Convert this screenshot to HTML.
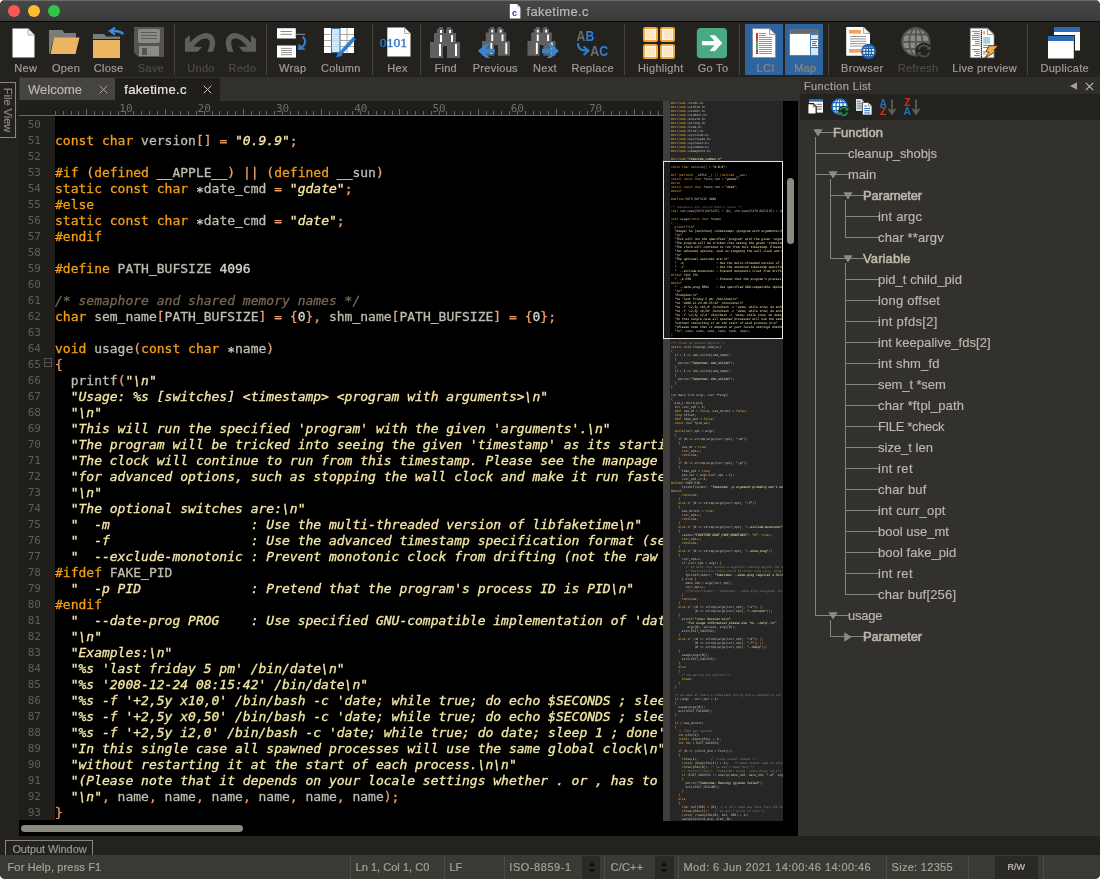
<!DOCTYPE html>
<html lang="en">
<head>
<meta charset="utf-8">
<title>faketime.c</title>
<style>
html,body{margin:0;padding:0;background:#fff;}
body{width:1100px;height:879px;overflow:hidden;position:relative;font-family:"Liberation Sans",sans-serif;}
#win{position:absolute;left:0;top:0;width:1100px;height:879px;background:#23221e;border-radius:5px;overflow:hidden;will-change:transform;}
#win *{box-sizing:border-box;}
.abs{position:absolute;}
/* title bar */
#title{position:absolute;left:0;top:0;width:1100px;height:21px;background:linear-gradient(#464646,#3b3b3b);border-top:1px solid #6a6a6a;}
#title .dot{position:absolute;top:4px;width:12px;height:12px;border-radius:50%;}
#title .name{-webkit-text-stroke:0.2px;position:absolute;left:526.5px;top:3px;font-size:13px;line-height:16px;color:#b9b8b4;letter-spacing:0.3px;white-space:pre;}
#tline{position:absolute;left:0;top:21px;width:1100px;height:1px;background:#0a0a0a;}
/* toolbar */
#tb{position:absolute;left:0;top:22px;width:1100px;height:55px;background:#23221e;}
.lbl{-webkit-text-stroke:0.2px;position:absolute;top:61px;font-size:11px;line-height:14px;color:#a29d92;white-space:pre;transform:translateX(-50%);letter-spacing:0.3px;}
.lbl.dim{color:#4f4c47;}
.lbl.act{color:#8d877c;}
.sep{position:absolute;top:24px;width:1px;height:51px;background:#46423c;}
.actbg{position:absolute;top:24px;height:51px;background:#2f659e;}
.ico{position:absolute;overflow:visible;}
/* tab bar */
#tabs{position:absolute;left:0;top:77px;width:800px;height:24px;background:#32312d;}
#tab1{position:absolute;left:20px;top:78px;width:95px;height:22px;background:#454440;}
#tab2{position:absolute;left:115px;top:78px;width:105px;height:23px;background:#1f1e1b;}
.tabt{-webkit-text-stroke:0.2px;position:absolute;top:4px;font-size:13px;line-height:16px;white-space:pre;}
/* left strip */
#lstrip{position:absolute;left:0;top:77px;width:19px;height:759px;background:#23221e;}
#fv{position:absolute;left:-1px;top:82px;width:17px;height:56px;border:1px solid #8a867c;}
#fvt{position:absolute;left:8px;top:110px;width:0;height:0;}
#fvt span{-webkit-text-stroke:0.2px;position:absolute;left:-30px;top:-7px;width:60px;height:14px;text-align:center;font-size:11px;line-height:14px;color:#8f8b80;transform:rotate(90deg);letter-spacing:0px;white-space:pre;}
/* ruler */
#ruler{position:absolute;left:19px;top:100px;width:644px;height:16px;background:#1f1e1b;overflow:hidden;}
#ruler .base{position:absolute;left:0;top:15px;width:644px;height:1px;background:#6e6c66;}
#rin{position:absolute;left:-19px;top:0;}
#rin i{position:absolute;bottom:-16px;width:1px;background:#686660;top:auto;}
#rin span{position:absolute;top:3px;width:20px;text-align:center;font-family:"DejaVu Sans Mono",monospace;font-size:11px;line-height:12px;color:#6e6c66;}
/* gutter */
#gut{position:absolute;left:19px;top:116px;width:36px;height:704px;background:#1f1e1b;font-family:"DejaVu Sans Mono",monospace;font-size:11px;line-height:16px;color:#5f5e5a;text-align:right;padding-right:14px;}
#gut div{height:16px;padding-top:1px;}
#fold{position:absolute;left:44px;top:358px;width:8px;height:9px;border:1px solid #55544f;}
#fold:after{content:"";position:absolute;left:0;top:3px;width:6px;height:1px;background:#55544f;}
/* code */
#code{position:absolute;left:55px;top:116px;width:608px;height:720px;background:#000;overflow:hidden;font-family:"DejaVu Sans Mono",monospace;font-size:13px;line-height:16px;color:#bdbcb0;}
#code .ln{height:16px;white-space:pre;position:relative;top:1px;-webkit-text-stroke:0.3px;}
#code em,#mini em{font-style:normal;color:#f39f12;}
#code s,#mini s{text-decoration:none;color:#ee9f6a;}
#code u,#mini u{text-decoration:none;color:#d6d5cc;}
#code u.a{position:relative;top:2.5px;}
#code b.p,#mini b.p{color:#f39f12;font-weight:normal;}
#code b.s,#mini b.s{color:#f6e6a6;font-weight:normal;font-style:oblique;}
#code i.c,#mini i.c{color:#75664f;font-style:oblique;}
#hthumb{position:absolute;left:21px;top:825px;width:222px;height:7px;border-radius:3.5px;background:#8a8a80;}
#blk{position:absolute;left:19px;top:820px;width:36px;height:16px;background:#000;}
/* minimap */
#mm{position:absolute;left:663px;top:101px;width:120px;height:720px;background:#000;overflow:hidden;}
#mmg{position:absolute;left:0;top:0;width:7px;height:720px;background:#1f1e1b;}
#mini{position:absolute;left:8px;top:0px;font-family:"DejaVu Sans Mono",monospace;font-size:3px;line-height:4px;color:#bdbcb0;}
#mini div{height:4px;white-space:pre;}
.mmo{position:absolute;left:0;width:120px;background:rgba(255,255,255,0.15);}
#mmbox{position:absolute;left:0;top:60px;width:120px;height:178px;border:1px solid #e4e4e0;}
#vtrack{position:absolute;left:783px;top:101px;width:15px;height:735px;background:#000;}
#vthumb{position:absolute;left:787px;top:178px;width:7px;height:66px;border-radius:3.5px;background:#8a8a80;}
#mmbot{position:absolute;left:663px;top:821px;width:135px;height:15px;background:#000;}
#split{position:absolute;left:798px;top:77px;width:2px;height:759px;background:#32312d;}
/* panel */
#ph{position:absolute;left:800px;top:77px;width:300px;height:17px;background:#2e2d29;}
#ph .t{-webkit-text-stroke:0.2px;position:absolute;left:4px;top:2px;font-size:11px;line-height:14px;color:#a8a397;letter-spacing:0.38px;white-space:pre;}
#pt{position:absolute;left:800px;top:94px;width:300px;height:26px;background:#23221e;}
#tree{position:absolute;left:800px;top:120px;width:300px;height:716px;background:#32312d;}
#treein{position:absolute;left:-800px;top:-120px;}
#treein i.h{position:absolute;height:1px;background:#85847f;}
#treein i.v{position:absolute;width:1px;background:#85847f;}
#treein .tri{position:absolute;}
#treein .tl{position:absolute;font-size:13px;line-height:16px;color:#bcb8ab;white-space:pre;-webkit-text-stroke:0.15px #bcb8ab;}
#treein .tl.b{-webkit-text-stroke:0.55px #bcb8ab;}
/* bottom */
#outrow{position:absolute;left:0;top:836px;width:1100px;height:19px;background:#23221e;}
#outtab{position:absolute;left:5px;top:840px;width:88px;height:17px;border:1px solid #8a867c;}
#outtab span{-webkit-text-stroke:0.2px;position:absolute;left:6.4px;top:1px;font-size:11px;line-height:14px;color:#9b978c;letter-spacing:-0.08px;white-space:pre;}
#status{position:absolute;left:0;top:855px;width:1100px;height:24px;background:#3a3a35;}
#status .t{-webkit-text-stroke:0.2px;position:absolute;top:5px;font-size:11px;line-height:14px;color:#a5a196;white-space:pre;}
#status .sp{position:absolute;top:1px;width:1px;height:23px;background:#4d4b46;}
#status .bx{position:absolute;top:1px;height:23px;background:#2a2926;}
</style>
</head>
<body>
<div id="win">
<div id="title">
<div class="dot" style="left:8px;background:#fc5753;"></div>
<div class="dot" style="left:28px;background:#fdbc2f;"></div>
<div class="dot" style="left:48px;background:#30c748;"></div>
<svg class="abs" style="left:509px;top:2px" width="13" height="16" viewBox="0 0 13 16"><path d="M0.8 1h7l3.6 3.6V15.4H0.8z" fill="#fff"/><path d="M7.8 1l3.6 3.6H7.8z" fill="#d8d8e0"/><text x="3" y="13" font-family="Liberation Sans,sans-serif" font-size="9" font-weight="bold" fill="#4a1f9a">c</text></svg>
<div class="name">faketime.c</div>
</div>
<div id="tline"></div>
<div id="tb"></div>
<svg class="abs" style="left:0;top:22px" width="1100" height="55" viewBox="0 22 1100 55">
<!-- New -->
<path d="M12.5 28.5H28L34.5 35V57.5H12.5Z" fill="#fff"/>
<path d="M28 28.5V35H34.5Z" fill="#f4f4f4" stroke="#9a9a9a" stroke-width="0.8" stroke-linejoin="round"/>
<!-- Open -->
<path d="M49 30H62.3L64.5 33H76V38H53.8L49.8 53.5H49Z" fill="#7b7b7b"/>
<path d="M54 37.5H79.5L75.5 54H50.5Z" fill="#ebb562"/>
<!-- Close -->
<path d="M93 34H104L106.3 36.5H120V39H93Z" fill="#7b7b7b"/>
<rect x="93" y="40" width="27" height="18" fill="#ebb562"/>
<path d="M111.5 31.2C118 30.4 121 31.6 123.2 34.2" stroke="#3a8ad8" stroke-width="2.6" fill="none"/>
<path d="M115.2 27.6L110 31.1L115.2 34.6" stroke="#3a8ad8" stroke-width="2.2" fill="none" stroke-linejoin="miter"/>
<!-- Save -->
<path d="M134 27H164V57H138.5L134 52.5Z" fill="#55544f"/>
<rect x="138" y="29" width="22" height="14" rx="2" fill="#8c8a87"/>
<path d="M141 32.5H157M141 35.5H157M141 38.5H157" stroke="#5d5c58" stroke-width="1"/>
<rect x="139" y="46" width="20" height="10" fill="#8c8a87"/>
<rect x="142" y="48" width="5" height="7" fill="#55544f"/>
<!-- Undo -->
<path fill="#5f5e5b" d="M184.95 39.2L189.7 34.9L190 42.6C193 39.5 198 34 205.6 33.1C212 33 215.2 38 215.1 43.1C215 47 214 49.5 212.8 51.8H207.2C208.5 49 209.8 45.5 209.8 42.4C209.8 39.8 207.5 38.5 205.6 38.5C201 38.5 198 42 193.6 46.5L202 47L197.7 51.8H184.95Z"/>
<!-- Redo -->
<path fill="#5f5e5b" transform="translate(440.9,0) scale(-1,1)" d="M184.95 39.2L189.7 34.9L190 42.6C193 39.5 198 34 205.6 33.1C212 33 215.2 38 215.1 43.1C215 47 214 49.5 212.8 51.8H207.2C208.5 49 209.8 45.5 209.8 42.4C209.8 39.8 207.5 38.5 205.6 38.5C201 38.5 198 42 193.6 46.5L202 47L197.7 51.8H184.95Z"/>
<!-- Wrap -->
<rect x="277" y="28.2" width="18.8" height="10.3" fill="#fff"/>
<path d="M280.5 31.5H292M280.5 34.3H292" stroke="#8a8a8a" stroke-width="1"/>
<path d="M295.8 34.3H305" stroke="#b0b0b0" stroke-width="0.8"/>
<rect x="277" y="45.5" width="19" height="12.1" fill="#fff"/>
<path d="M281 48.4H292M281 50.5H292M281 52.6H292M281 54.7H292" stroke="#8a8a8a" stroke-width="0.9"/>
<path d="M302.6 36.6C306.8 40.5 305.5 45.5 300.5 47.8" stroke="#2f7fd0" stroke-width="2" fill="none"/>
<path d="M298.6 43.8L298 50L305.8 49.4Z" fill="#2f7fd0"/>
<!-- Column -->
<rect x="324" y="28" width="30" height="25" fill="#fff"/>
<path d="M347 28V53M324 34.5H354M324 40.5H354M324 46.5H354" stroke="#a59d8e" stroke-width="0.9"/>
<rect x="331.5" y="28.5" width="8.5" height="24" fill="#cfe9fb" stroke="#3b6e9e" stroke-width="1"/>
<path d="M331.5 34.5H340M331.5 40.5H340M331.5 46.5H340" stroke="#b5d3ea" stroke-width="0.8"/>
<path d="M354.6 38L340.3 53.5" stroke="#2f7fd0" stroke-width="3.6"/>
<path d="M338.2 51.6L342.6 55.6L336.2 57.6Z" fill="#2f7fd0"/>
<!-- Hex -->
<path d="M387.3 27.5H404.5L410.5 33.5V56.5H387.3Z" fill="#fff"/>
<path d="M404.5 27.5V33.5H410.5Z" fill="#f4f4f4" stroke="#9a9a9a" stroke-width="0.8" stroke-linejoin="round"/>
<text x="379.8" y="46.8" font-family="Liberation Serif,serif" font-size="12.6" fill="#2a78c8" stroke="#2a78c8" stroke-width="0.35" textLength="27.4" lengthAdjust="spacingAndGlyphs">0101</text>
<!-- Find -->
<g id="bino">
<path fill="#606060" d="M439 27h4v2h1v4h2v-4h1v-2h4v2h2v4h3v9h4v16h-13v-11.7h-4V58h-13V42h4v-9h3v-4h2z"/>
<path fill="#fff" d="M440 30h2v3h-2zM449 30h2v3h-2zM440 35h2v7h-2zM451 35h2v7h-2zM439 44h2v12h-2zM455 44h2v12h-2z"/>
</g>
<!-- Previous -->
<g transform="translate(482,27) scale(0.9333,0.93) translate(-430,-27)">
<path fill="#606060" d="M439 27h4v2h1v4h2v-4h1v-2h4v2h2v4h3v9h4v16h-13v-11.7h-4V58h-13V42h4v-9h3v-4h2z"/>
<path fill="#fff" d="M440 30h2v3h-2zM449 30h2v3h-2zM440 35h2v7h-2zM451 35h2v7h-2zM439 44h2v12h-2zM455 44h2v12h-2z"/>
</g>
<path fill="#3a85d0" d="M477.8 51L486 43.8H490L484.8 48.8H494.8V53.2H484.8L490 58H486Z"/>
<!-- Next -->
<g transform="translate(527.5,27) scale(0.9333,0.93) translate(-430,-27)">
<path fill="#606060" d="M439 27h4v2h1v4h2v-4h1v-2h4v2h2v4h3v9h4v16h-13v-11.7h-4V58h-13V42h4v-9h3v-4h2z"/>
<path fill="#fff" d="M440 30h2v3h-2zM449 30h2v3h-2zM440 35h2v7h-2zM451 35h2v7h-2zM439 44h2v12h-2zM455 44h2v12h-2z"/>
</g>
<path fill="#3a85d0" transform="translate(1036.8,0) scale(-1,1)" d="M477.8 51L486 43.8H490L484.8 48.8H494.8V53.2H484.8L490 58H486Z"/>
<!-- Replace -->
<text x="576.6" y="40.6" font-family="Liberation Sans,sans-serif" font-size="14.4" font-weight="bold" textLength="17.6" lengthAdjust="spacingAndGlyphs"><tspan fill="#6e6e6e">A</tspan><tspan fill="#2a80d8">B</tspan></text>
<text x="590.3" y="55.8" font-family="Liberation Sans,sans-serif" font-size="14.4" font-weight="bold" textLength="18" lengthAdjust="spacingAndGlyphs"><tspan fill="#6e6e6e">A</tspan><tspan fill="#2a80d8">C</tspan></text>
<path d="M578 43.2C578 49 581 50.6 587.5 50.6" stroke="#2a80d8" stroke-width="2" fill="none"/>
<path d="M583.6 46.4L588.4 50.7L583.6 55" stroke="#2a80d8" stroke-width="2" fill="none"/>
<!-- Highlight -->
<g id="hsq"><rect x="644" y="28" width="13" height="13" rx="1.5" fill="#ffe5c4" stroke="#f0a83c" stroke-width="2"/><rect x="645.5" y="29.5" width="10" height="10" fill="none" stroke="#fff6ea" stroke-width="1"/></g>
<g transform="translate(17,0)"><rect x="644" y="28" width="13" height="13" rx="1.5" fill="#ffe5c4" stroke="#f0a83c" stroke-width="2"/><rect x="645.5" y="29.5" width="10" height="10" fill="none" stroke="#fff6ea" stroke-width="1"/></g>
<g transform="translate(0,17)"><rect x="644" y="28" width="13" height="13" rx="1.5" fill="#ffe5c4" stroke="#f0a83c" stroke-width="2"/><rect x="645.5" y="29.5" width="10" height="10" fill="none" stroke="#fff6ea" stroke-width="1"/></g>
<g transform="translate(17,17)"><rect x="644" y="28" width="13" height="13" rx="1.5" fill="#ffe5c4" stroke="#f0a83c" stroke-width="2"/><rect x="645.5" y="29.5" width="10" height="10" fill="none" stroke="#fff6ea" stroke-width="1"/></g>
<!-- Go To -->
<rect x="696.8" y="28" width="30.2" height="30.2" rx="4" fill="#48ab82"/>
<path d="M702 41H714.5L709.5 35.2H715L722.3 43.1L715 51H709.5L714.5 45.2H702Z" fill="#fff"/>
<!-- LCI / Map active -->
<rect x="745" y="24" width="38" height="51" fill="#2f659e"/>
<rect x="785" y="24" width="38" height="51" fill="#2f659e"/>
<path d="M752.5 28.6H769.5L775.5 34.6V57.5H752.5Z" fill="#fff" stroke="#8a8a8a" stroke-width="0.8"/>
<path d="M769.5 28.6V34.6H775.5Z" fill="#f4f4f4" stroke="#8a8a8a" stroke-width="0.8" stroke-linejoin="round"/>
<rect x="756" y="33" width="2" height="8" fill="#c8402c"/><rect x="756" y="41" width="2" height="9" fill="#40a878"/><rect x="756" y="50" width="2" height="4" fill="#c8402c"/>
<path d="M759 33.5H766M759 35.5H766M759 37.5H772M759 39.5H772M759 41.5H772M759 43.5H772M759 45.5H772M759 47.5H772M759 49.5H772M759 51.5H772M759 53.5H772" stroke="#8a8a8a" stroke-width="0.9"/>
<rect x="789" y="29" width="30" height="5" fill="#6b6b6b"/>
<rect x="789.4" y="33.6" width="29.2" height="22" fill="#fff" stroke="#6b6b6b" stroke-width="0.8"/>
<rect x="810" y="34" width="8.6" height="21.6" fill="#3a78b8"/>
<rect x="811" y="35" width="7" height="4" fill="#cfe9fb"/><rect x="811" y="40" width="7" height="7" fill="#fff"/><rect x="811" y="48" width="7" height="7" fill="#cfe9fb"/>
<path d="M812 41.7H817M812 43.6H816M812 45.5H817" stroke="#555" stroke-width="0.9"/>
<!-- Browser -->
<path d="M846.2 27H863.5L870 33.5V55.8H846.2Z" fill="#fff"/>
<path d="M863.5 27V33.5H870Z" fill="#f0f0f0" stroke="#a0a0a0" stroke-width="0.8" stroke-linejoin="round"/>
<rect x="849" y="30" width="12" height="3.6" fill="#f0a060"/><rect x="849" y="49" width="12" height="3.6" fill="#f0a060"/>
<path d="M850 36.5H866M850 38.9H866M850 41.3H866M850 43.7H866M850 46.1H866" stroke="#8a8a8a" stroke-width="0.9"/>
<circle cx="868.6" cy="51.4" r="7.6" fill="#1f5fa8"/>
<circle cx="868.6" cy="51.4" r="5.6" fill="#fff"/>
<path d="M868.6 45.8V57M863 51.4H874.2M864 48.4H873.2M864 54.4H873.2" stroke="#1f5fa8" stroke-width="1.3" fill="none"/>
<ellipse cx="868.6" cy="51.4" rx="2.8" ry="5.6" fill="none" stroke="#1f5fa8" stroke-width="1.2"/>
<!-- Refresh -->
<circle cx="915.8" cy="41.8" r="13.6" fill="#8b8a88" stroke="#565553" stroke-width="2"/>
<path d="M915.8 28V55.6M902 41.8H929.6M904.5 34.5H927M904.5 49H927" stroke="#565553" stroke-width="1.8" fill="none"/>
<ellipse cx="915.8" cy="41.8" rx="6.5" ry="13.6" fill="none" stroke="#565553" stroke-width="1.8"/>
<circle cx="924" cy="51" r="8.6" fill="#23221e"/>
<path d="M918.6 49.5A5.6 5.6 0 0 1 928.8 48.2M929.4 52.5A5.6 5.6 0 0 1 919.2 53.8" stroke="#4b4a48" stroke-width="2" fill="none"/>
<path d="M930.6 45.5V50H926.2ZM917.4 56.5V52H921.8Z" fill="#4b4a48"/>
<!-- Live preview -->
<path d="M970.3 28.2H987.4L994 34.6V57.7H970.3Z" fill="#fff" stroke="#8c8c8c" stroke-width="0.7"/>
<path d="M987.4 28.2V34.6H994Z" fill="#fafafa" stroke="#8c8c8c" stroke-width="0.8" stroke-linejoin="round"/>
<path d="M972 31.4H979.8M974 33.4H979.8M972 35.4H979.8M972 37.4H979.8M972 39.4H979.8M975 41.4H979.8M975 43.4H979.8M972 45.4H979.8M972 49.5H979.8M974 51.5H979.8M976 53.5H979.8M974 55.5H979.8M983.2 45.4H990M983.2 47.5H988" stroke="#777" stroke-width="0.9"/>
<path d="M981.4 30V57.4" stroke="#111" stroke-width="1.1" stroke-dasharray="1.5 0.5"/>
<rect x="983.2" y="31.1" width="1.9" height="3.5" fill="#f0a060"/><rect x="983.2" y="51" width="2.2" height="3.7" fill="#f0a060"/>
<rect x="983.2" y="37" width="6.8" height="6.7" fill="#a5cfee"/>
<path d="M989.3 45.6L998.2 45.8L993.8 50.2L996 51.2L984.1 58.8L988.9 52.3L985.8 51.7Z" fill="#f0b040" stroke="#23221e" stroke-width="0.8" stroke-linejoin="round"/>
<!-- Duplicate -->
<rect x="1054" y="27" width="26" height="23.5" fill="#fff"/><rect x="1054" y="27" width="26" height="5" fill="#2d6cb5"/>
<rect x="1047" y="35" width="28" height="24.5" fill="#23221e"/>
<rect x="1048" y="36" width="25.8" height="22.5" fill="#fff"/><rect x="1048" y="36" width="25.8" height="5" fill="#2d6cb5"/>
</svg>
<i class="sep" style="left:174px"></i><i class="sep" style="left:266px"></i><i class="sep" style="left:371.5px"></i><i class="sep" style="left:420px"></i><i class="sep" style="left:624px"></i><i class="sep" style="left:739px"></i><i class="sep" style="left:828px"></i><i class="sep" style="left:1027px"></i>
<span class="lbl" style="left:25.8px">New</span>
<span class="lbl" style="left:66px">Open</span>
<span class="lbl" style="left:108.6px">Close</span>
<span class="lbl dim" style="left:151px">Save</span>
<span class="lbl dim" style="left:201px">Undo</span>
<span class="lbl dim" style="left:242.3px">Redo</span>
<span class="lbl" style="left:292.7px">Wrap</span>
<span class="lbl" style="left:340.8px">Column</span>
<span class="lbl" style="left:397.5px">Hex</span>
<span class="lbl" style="left:445.7px">Find</span>
<span class="lbl" style="left:495.3px">Previous</span>
<span class="lbl" style="left:545px">Next</span>
<span class="lbl" style="left:592.7px">Replace</span>
<span class="lbl" style="left:660.8px">Highlight</span>
<span class="lbl" style="left:713px">Go To</span>
<span class="lbl act" style="left:765.5px">LCI</span>
<span class="lbl act" style="left:805.3px">Map</span>
<span class="lbl" style="left:862.3px">Browser</span>
<span class="lbl dim" style="left:918px">Refresh</span>
<span class="lbl" style="left:984.6px">Live preview</span>
<span class="lbl" style="left:1064.7px">Duplicate</span>

<div id="tabs"></div>
<div id="lstrip"></div>
<div id="fv"></div><div id="fvt"><span>File View</span></div>
<div id="tab1"><span class="tabt" style="left:8px;color:#b9b5a9;">Welcome</span>
<svg class="abs" style="left:79px;top:7px" width="9" height="9" viewBox="0 0 9 9"><path d="M0.7 0.7l7.6 7.6M8.3 0.7l-7.6 7.6" stroke="#aaa69b" stroke-width="1" fill="none"/></svg></div>
<div id="tab2"><span class="tabt" style="left:9.3px;color:#eae6db;letter-spacing:0.32px;">faketime.c</span>
<svg class="abs" style="left:88px;top:7px" width="9" height="9" viewBox="0 0 9 9"><path d="M0.7 0.7l7.6 7.6M8.3 0.7l-7.6 7.6" stroke="#c9c5ba" stroke-width="1" fill="none"/></svg></div>
<div class="abs" style="left:220px;top:100px;width:443px;height:1px;background:#32312d;z-index:3"></div>
<div id="ruler"><div class="base"></div><div id="rin"><i style="left:55.00px;height:4.6px"></i><i style="left:62.83px;height:4.6px"></i><i style="left:70.66px;height:4.6px"></i><i style="left:78.48px;height:4.6px"></i><i style="left:86.31px;height:7.4px"></i><i style="left:94.14px;height:4.6px"></i><i style="left:101.97px;height:4.6px"></i><i style="left:109.80px;height:4.6px"></i><i style="left:117.62px;height:4.6px"></i><i style="left:125.45px;height:4.6px"></i><span style="left:115.95px">10</span><i style="left:133.28px;height:4.6px"></i><i style="left:141.11px;height:4.6px"></i><i style="left:148.94px;height:4.6px"></i><i style="left:156.76px;height:4.6px"></i><i style="left:164.59px;height:7.4px"></i><i style="left:172.42px;height:4.6px"></i><i style="left:180.25px;height:4.6px"></i><i style="left:188.08px;height:4.6px"></i><i style="left:195.90px;height:4.6px"></i><i style="left:203.73px;height:4.6px"></i><span style="left:194.23px">20</span><i style="left:211.56px;height:4.6px"></i><i style="left:219.39px;height:4.6px"></i><i style="left:227.22px;height:4.6px"></i><i style="left:235.04px;height:4.6px"></i><i style="left:242.87px;height:7.4px"></i><i style="left:250.70px;height:4.6px"></i><i style="left:258.53px;height:4.6px"></i><i style="left:266.36px;height:4.6px"></i><i style="left:274.18px;height:4.6px"></i><i style="left:282.01px;height:4.6px"></i><span style="left:272.51px">30</span><i style="left:289.84px;height:4.6px"></i><i style="left:297.67px;height:4.6px"></i><i style="left:305.50px;height:4.6px"></i><i style="left:313.32px;height:4.6px"></i><i style="left:321.15px;height:7.4px"></i><i style="left:328.98px;height:4.6px"></i><i style="left:336.81px;height:4.6px"></i><i style="left:344.64px;height:4.6px"></i><i style="left:352.46px;height:4.6px"></i><i style="left:360.29px;height:4.6px"></i><span style="left:350.79px">40</span><i style="left:368.12px;height:4.6px"></i><i style="left:375.95px;height:4.6px"></i><i style="left:383.78px;height:4.6px"></i><i style="left:391.60px;height:4.6px"></i><i style="left:399.43px;height:7.4px"></i><i style="left:407.26px;height:4.6px"></i><i style="left:415.09px;height:4.6px"></i><i style="left:422.92px;height:4.6px"></i><i style="left:430.74px;height:4.6px"></i><i style="left:438.57px;height:4.6px"></i><span style="left:429.07px">50</span><i style="left:446.40px;height:4.6px"></i><i style="left:454.23px;height:4.6px"></i><i style="left:462.06px;height:4.6px"></i><i style="left:469.88px;height:4.6px"></i><i style="left:477.71px;height:7.4px"></i><i style="left:485.54px;height:4.6px"></i><i style="left:493.37px;height:4.6px"></i><i style="left:501.20px;height:4.6px"></i><i style="left:509.02px;height:4.6px"></i><i style="left:516.85px;height:4.6px"></i><span style="left:507.35px">60</span><i style="left:524.68px;height:4.6px"></i><i style="left:532.51px;height:4.6px"></i><i style="left:540.34px;height:4.6px"></i><i style="left:548.16px;height:4.6px"></i><i style="left:555.99px;height:7.4px"></i><i style="left:563.82px;height:4.6px"></i><i style="left:571.65px;height:4.6px"></i><i style="left:579.48px;height:4.6px"></i><i style="left:587.30px;height:4.6px"></i><i style="left:595.13px;height:4.6px"></i><span style="left:585.63px">70</span><i style="left:602.96px;height:4.6px"></i><i style="left:610.79px;height:4.6px"></i><i style="left:618.62px;height:4.6px"></i><i style="left:626.44px;height:4.6px"></i><i style="left:634.27px;height:7.4px"></i><i style="left:642.10px;height:4.6px"></i><i style="left:649.93px;height:4.6px"></i><i style="left:657.76px;height:4.6px"></i></div></div>
<div id="code">
<div class="ln">&nbsp;</div>
<div class="ln"><em>const</em> <em>char</em> version<s>[]</s> <s>=</s> <b class="s">"0.9.9"</b><s>;</s></div>
<div class="ln">&nbsp;</div>
<div class="ln"><b class="p">#if</b> <s>(</s><em>defined</em> __APPLE__<s>)</s> <s>||</s> <s>(</s><em>defined</em> __sun<s>)</s></div>
<div class="ln"><em>static</em> <em>const</em> <em>char</em> <u class="a">*</u>date_cmd <s>=</s> <b class="s">"gdate"</b><s>;</s></div>
<div class="ln"><b class="p">#else</b></div>
<div class="ln"><em>static</em> <em>const</em> <em>char</em> <u class="a">*</u>date_cmd <s>=</s> <b class="s">"date"</b><s>;</s></div>
<div class="ln"><b class="p">#endif</b></div>
<div class="ln">&nbsp;</div>
<div class="ln"><b class="p">#define</b> PATH_BUFSIZE <u>4096</u></div>
<div class="ln">&nbsp;</div>
<div class="ln"><i class="c">/* semaphore and shared memory names */</i></div>
<div class="ln"><em>char</em> sem_name<s>[</s>PATH_BUFSIZE<s>]</s> <s>=</s> <s>{</s><u>0</u><s>},</s> shm_name<s>[</s>PATH_BUFSIZE<s>]</s> <s>=</s> <s>{</s><u>0</u><s>};</s></div>
<div class="ln">&nbsp;</div>
<div class="ln"><em>void</em> usage<s>(</s><em>const</em> <em>char</em> <u class="a">*</u>name<s>)</s></div>
<div class="ln"><s>{</s></div>
<div class="ln">  printf<s>(</s><b class="s">"\n"</b></div>
<div class="ln">  <b class="s">"Usage: %s [switches] &lt;timestamp&gt; &lt;program with arguments&gt;\n"</b></div>
<div class="ln">  <b class="s">"\n"</b></div>
<div class="ln">  <b class="s">"This will run the specified 'program' with the given 'arguments'.\n"</b></div>
<div class="ln">  <b class="s">"The program will be tricked into seeing the given 'timestamp' as its starting date and time.\n"</b></div>
<div class="ln">  <b class="s">"The clock will continue to run from this timestamp. Please see the manpage (man faketime)\n"</b></div>
<div class="ln">  <b class="s">"for advanced options, such as stopping the wall clock and make it run faster or slower.\n"</b></div>
<div class="ln">  <b class="s">"\n"</b></div>
<div class="ln">  <b class="s">"The optional switches are:\n"</b></div>
<div class="ln">  <b class="s">"  -m                  : Use the multi-threaded version of libfaketime\n"</b></div>
<div class="ln">  <b class="s">"  -f                  : Use the advanced timestamp specification format (see manpage)\n"</b></div>
<div class="ln">  <b class="s">"  --exclude-monotonic : Prevent monotonic clock from drifting (not the raw monotonic one)\n"</b></div>
<div class="ln"><b class="p">#ifdef</b> FAKE_PID</div>
<div class="ln">  <b class="s">"  -p PID              : Pretend that the program's process ID is PID\n"</b></div>
<div class="ln"><b class="p">#endif</b></div>
<div class="ln">  <b class="s">"  --date-prog PROG    : Use specified GNU-compatible implementation of 'date' program\n"</b></div>
<div class="ln">  <b class="s">"\n"</b></div>
<div class="ln">  <b class="s">"Examples:\n"</b></div>
<div class="ln">  <b class="s">"%s 'last friday 5 pm' /bin/date\n"</b></div>
<div class="ln">  <b class="s">"%s '2008-12-24 08:15:42' /bin/date\n"</b></div>
<div class="ln">  <b class="s">"%s -f '+2,5y x10,0' /bin/bash -c 'date; while true; do echo $SECONDS ; sleep 1 ; done'\n"</b></div>
<div class="ln">  <b class="s">"%s -f '+2,5y x0,50' /bin/bash -c 'date; while true; do echo $SECONDS ; sleep 1 ; done'\n"</b></div>
<div class="ln">  <b class="s">"%s -f '+2,5y i2,0' /bin/bash -c 'date; while true; do date; sleep 1 ; done'\n"</b></div>
<div class="ln">  <b class="s">"In this single case all spawned processes will use the same global clock\n"</b></div>
<div class="ln">  <b class="s">"without restarting it at the start of each process.\n\n"</b></div>
<div class="ln">  <b class="s">"(Please note that it depends on your locale settings whether . or , has to be used for fractions)\n"</b></div>
<div class="ln">  <b class="s">"\n"</b><s>,</s> name<s>,</s> name<s>,</s> name<s>,</s> name<s>,</s> name<s>,</s> name<s>);</s></div>
<div class="ln"><s>}</s></div>
</div>
<div id="gut">
<div>50</div>
<div>51</div>
<div>52</div>
<div>53</div>
<div>54</div>
<div>55</div>
<div>56</div>
<div>57</div>
<div>58</div>
<div>59</div>
<div>60</div>
<div>61</div>
<div>62</div>
<div>63</div>
<div>64</div>
<div>65</div>
<div>66</div>
<div>67</div>
<div>68</div>
<div>69</div>
<div>70</div>
<div>71</div>
<div>72</div>
<div>73</div>
<div>74</div>
<div>75</div>
<div>76</div>
<div>77</div>
<div>78</div>
<div>79</div>
<div>80</div>
<div>81</div>
<div>82</div>
<div>83</div>
<div>84</div>
<div>85</div>
<div>86</div>
<div>87</div>
<div>88</div>
<div>89</div>
<div>90</div>
<div>91</div>
<div>92</div>
<div>93</div>
</div>
<div id="fold"></div>
<div id="blk"></div>
<div id="hthumb"></div>
<div id="mm"><div id="mmg"></div><div id="mini">
<div><b class="p">#include</b> &lt;stdio.h&gt;</div>
<div><b class="p">#include</b> &lt;stdlib.h&gt;</div>
<div><b class="p">#include</b> &lt;stdint.h&gt;</div>
<div><b class="p">#include</b> &lt;stdbool.h&gt;</div>
<div><b class="p">#include</b> &lt;unistd.h&gt;</div>
<div><b class="p">#include</b> &lt;string.h&gt;</div>
<div><b class="p">#include</b> &lt;time.h&gt;</div>
<div><b class="p">#include</b> &lt;fcntl.h&gt;</div>
<div><b class="p">#include</b> &lt;sys/stat.h&gt;</div>
<div><b class="p">#include</b> &lt;sys/types.h&gt;</div>
<div><b class="p">#include</b> &lt;sys/wait.h&gt;</div>
<div><b class="p">#include</b> &lt;sys/mman.h&gt;</div>
<div><b class="p">#include</b> &lt;semaphore.h&gt;</div>
<div>&nbsp;</div>
<div><b class="p">#include</b> <b class="s">"faketime_common.h"</b></div>
<div>&nbsp;</div>
<div><em>const</em> <em>char</em> version<s>[]</s> <s>=</s> <b class="s">"0.9.9"</b><s>;</s></div>
<div>&nbsp;</div>
<div><b class="p">#if</b> <s>(</s><em>defined</em> __APPLE__<s>)</s> <s>||</s> <s>(</s><em>defined</em> __sun<s>)</s></div>
<div><em>static</em> <em>const</em> <em>char</em> <u class="a">*</u>date_cmd <s>=</s> <b class="s">"gdate"</b><s>;</s></div>
<div><b class="p">#else</b></div>
<div><em>static</em> <em>const</em> <em>char</em> <u class="a">*</u>date_cmd <s>=</s> <b class="s">"date"</b><s>;</s></div>
<div><b class="p">#endif</b></div>
<div>&nbsp;</div>
<div><b class="p">#define</b> PATH_BUFSIZE <u>4096</u></div>
<div>&nbsp;</div>
<div><i class="c">/* semaphore and shared memory names */</i></div>
<div><em>char</em> sem_name<s>[</s>PATH_BUFSIZE<s>]</s> <s>=</s> <s>{</s><u>0</u><s>},</s> shm_name<s>[</s>PATH_BUFSIZE<s>]</s> <s>=</s> <s>{</s><u>0</u><s>};</s></div>
<div>&nbsp;</div>
<div><em>void</em> usage<s>(</s><em>const</em> <em>char</em> <u class="a">*</u>name<s>)</s></div>
<div><s>{</s></div>
<div>  printf<s>(</s><b class="s">"\n"</b></div>
<div>  <b class="s">"Usage: %s [switches] &lt;timestamp&gt; &lt;program with arguments&gt;\n"</b></div>
<div>  <b class="s">"\n"</b></div>
<div>  <b class="s">"This will run the specified 'program' with the given 'arguments'.\n"</b></div>
<div>  <b class="s">"The program will be tricked into seeing the given 'timestamp' as its starting date and time.\n"</b></div>
<div>  <b class="s">"The clock will continue to run from this timestamp. Please see the manpage (man faketime)\n"</b></div>
<div>  <b class="s">"for advanced options, such as stopping the wall clock and make it run faster or slower.\n"</b></div>
<div>  <b class="s">"\n"</b></div>
<div>  <b class="s">"The optional switches are:\n"</b></div>
<div>  <b class="s">"  -m                  : Use the multi-threaded version of libfaketime\n"</b></div>
<div>  <b class="s">"  -f                  : Use the advanced timestamp specification format (see manpage)\n"</b></div>
<div>  <b class="s">"  --exclude-monotonic : Prevent monotonic clock from drifting (not the raw monotonic one)\n"</b></div>
<div><b class="p">#ifdef</b> FAKE_PID</div>
<div>  <b class="s">"  -p PID              : Pretend that the program's process ID is PID\n"</b></div>
<div><b class="p">#endif</b></div>
<div>  <b class="s">"  --date-prog PROG    : Use specified GNU-compatible implementation of 'date' program\n"</b></div>
<div>  <b class="s">"\n"</b></div>
<div>  <b class="s">"Examples:\n"</b></div>
<div>  <b class="s">"%s 'last friday 5 pm' /bin/date\n"</b></div>
<div>  <b class="s">"%s '2008-12-24 08:15:42' /bin/date\n"</b></div>
<div>  <b class="s">"%s -f '+2,5y x10,0' /bin/bash -c 'date; while true; do echo $SECONDS ; sleep 1 ; done'\n"</b></div>
<div>  <b class="s">"%s -f '+2,5y x0,50' /bin/bash -c 'date; while true; do echo $SECONDS ; sleep 1 ; done'\n"</b></div>
<div>  <b class="s">"%s -f '+2,5y i2,0' /bin/bash -c 'date; while true; do date; sleep 1 ; done'\n"</b></div>
<div>  <b class="s">"In this single case all spawned processes will use the same global clock\n"</b></div>
<div>  <b class="s">"without restarting it at the start of each process.\n\n"</b></div>
<div>  <b class="s">"(Please note that it depends on your locale settings whether . or , has to be used for fractions)\n"</b></div>
<div>  <b class="s">"\n"</b><s>,</s> name<s>,</s> name<s>,</s> name<s>,</s> name<s>,</s> name<s>,</s> name<s>);</s></div>
<div><s>}</s></div>
<div>&nbsp;</div>
<div><i class="c">/** Clean up shared objects */</i></div>
<div><em>static</em> <em>void</em> cleanup_shobjs<s>()</s></div>
<div><s>{</s></div>
<div>  <em>if</em> <s>(-</s><u>1</u> <s>==</s> sem_unlink<s>(</s>sem_name<s>))</s></div>
<div>  <s>{</s></div>
<div>    perror<s>(</s><b class="s">"faketime: sem_unlink"</b><s>);</s></div>
<div>  <s>}</s></div>
<div>  <em>if</em> <s>(-</s><u>1</u> <s>==</s> shm_unlink<s>(</s>shm_name<s>))</s></div>
<div>  <s>{</s></div>
<div>    perror<s>(</s><b class="s">"faketime: shm_unlink"</b><s>);</s></div>
<div>  <s>}</s></div>
<div><s>}</s></div>
<div>&nbsp;</div>
<div><em>int</em> main <s>(</s><em>int</em> argc<s>,</s> <em>char</em> <u class="a">*</u><u class="a">*</u>argv<s>)</s></div>
<div><s>{</s></div>
<div>  pid_t child_pid<s>;</s></div>
<div>  <em>int</em> curr_opt <s>=</s> <u>1</u><s>;</s></div>
<div>  <em>bool</em> use_mt <s>=</s> <em>false</em><s>,</s> use_direct <s>=</s> <em>false</em><s>;</s></div>
<div>  <em>long</em> offset<s>;</s></div>
<div>  <em>bool</em> fake_pid <s>=</s> <em>false</em><s>;</s></div>
<div>  <em>const</em> <em>char</em> <u class="a">*</u>pid_val<s>;</s></div>
<div>&nbsp;</div>
<div>  <em>while</em><s>(</s>curr_opt <s>&lt;</s> argc<s>)</s></div>
<div>  <s>{</s></div>
<div>    <em>if</em> <s>(</s><u>0</u> <s>==</s> strcmp<s>(</s>argv<s>[</s>curr_opt<s>],</s> <b class="s">"-m"</b><s>))</s></div>
<div>    <s>{</s></div>
<div>      use_mt <s>=</s> <em>true</em><s>;</s></div>
<div>      curr_opt<s>++;</s></div>
<div>      <em>continue</em><s>;</s></div>
<div>    <s>}</s></div>
<div>    <em>if</em> <s>(</s><u>0</u> <s>==</s> strcmp<s>(</s>argv<s>[</s>curr_opt<s>],</s> <b class="s">"-p"</b><s>))</s></div>
<div>    <s>{</s></div>
<div>      fake_pid <s>=</s> <em>true</em><s>;</s></div>
<div>      pid_val <s>=</s> argv<s>[</s>curr_opt <s>+</s> <u>1</u><s>];</s></div>
<div>      curr_opt <s>+=</s> <u>2</u><s>;</s></div>
<div><b class="p">#ifndef</b> FAKE_PID</div>
<div>      fprintf<s>(</s>stderr<s>,</s> <b class="s">"faketime: -p argument probably won't work (try rebuilding with -DFAKE_PID)\n"</b><s>);</s></div>
<div><b class="p">#endif</b></div>
<div>      <em>continue</em><s>;</s></div>
<div>    <s>}</s></div>
<div>    <em>else</em> <em>if</em> <s>(</s><u>0</u> <s>==</s> strcmp<s>(</s>argv<s>[</s>curr_opt<s>],</s> <b class="s">"-f"</b><s>))</s></div>
<div>    <s>{</s></div>
<div>      use_direct <s>=</s> <em>true</em><s>;</s></div>
<div>      curr_opt<s>++;</s></div>
<div>      <em>continue</em><s>;</s></div>
<div>    <s>}</s></div>
<div>    <em>else</em> <em>if</em> <s>(</s><u>0</u> <s>==</s> strcmp<s>(</s>argv<s>[</s>curr_opt<s>],</s> <b class="s">"--exclude-monotonic"</b><s>))</s></div>
<div>    <s>{</s></div>
<div>      setenv<s>(</s><b class="s">"FAKETIME_DONT_FAKE_MONOTONIC"</b><s>,</s> <b class="s">"1"</b><s>,</s> <em>true</em><s>);</s></div>
<div>      curr_opt<s>++;</s></div>
<div>      <em>continue</em><s>;</s></div>
<div>    <s>}</s></div>
<div>    <em>else</em> <em>if</em> <s>(</s><u>0</u> <s>==</s> strcmp<s>(</s>argv<s>[</s>curr_opt<s>],</s> <b class="s">"--date-prog"</b><s>))</s></div>
<div>    <s>{</s></div>
<div>      curr_opt<s>++;</s></div>
<div>      <em>if</em> <s>(</s>curr_opt <s>&gt;</s> argc<s>)</s> <s>{</s></div>
<div>        <i class="c">// At best this avoids a segfault reading beyond the argv[]</i></div>
<div>        <i class="c">// Realistically there would be other args (e.g. program to call)</i></div>
<div>        fprintf<s>(</s>stderr<s>,</s> <b class="s">"faketime: --date-prog requires a further argument\n"</b><s>);</s></div>
<div>      <s>}</s> <em>else</em> <s>{</s></div>
<div>        date_cmd <s>=</s> argv<s>[</s>curr_opt<s>];</s></div>
<div>        curr_opt<s>++;</s></div>
<div>        <i class="c">//fprintf(stderr, "faketime: --date-prog assigned: %s\n", date_cmd);</i></div>
<div>      <s>}</s></div>
<div>      <em>continue</em><s>;</s></div>
<div>    <s>}</s></div>
<div>    <em>else</em> <em>if</em> <s>((</s><u>0</u> <s>==</s> strcmp<s>(</s>argv<s>[</s>curr_opt<s>],</s> <b class="s">"-v"</b><s>))</s> <s>||</s></div>
<div>             <s>(</s><u>0</u> <s>==</s> strcmp<s>(</s>argv<s>[</s>curr_opt<s>],</s> <b class="s">"--version"</b><s>)))</s></div>
<div>    <s>{</s></div>
<div>      printf<s>(</s><b class="s">"\n%s: Version %s\n"</b></div>
<div>         <b class="s">"For usage information please use '%s --help'.\n"</b><s>,</s></div>
<div>         argv<s>[</s><u>0</u><s>],</s> version<s>,</s> argv<s>[</s><u>0</u><s>]);</s></div>
<div>      exit<s>(</s>EXIT_SUCCESS<s>);</s></div>
<div>    <s>}</s></div>
<div>    <em>else</em> <em>if</em> <s>((</s><u>0</u> <s>==</s> strcmp<s>(</s>argv<s>[</s>curr_opt<s>],</s> <b class="s">"-h"</b><s>))</s> <s>||</s></div>
<div>             <s>(</s><u>0</u> <s>==</s> strcmp<s>(</s>argv<s>[</s>curr_opt<s>],</s> <b class="s">"-?"</b><s>))</s> <s>||</s></div>
<div>             <s>(</s><u>0</u> <s>==</s> strcmp<s>(</s>argv<s>[</s>curr_opt<s>],</s> <b class="s">"--help"</b><s>)))</s></div>
<div>    <s>{</s></div>
<div>      usage<s>(</s>argv<s>[</s><u>0</u><s>]);</s></div>
<div>      exit<s>(</s>EXIT_SUCCESS<s>);</s></div>
<div>    <s>}</s></div>
<div>    <em>else</em></div>
<div>    <s>{</s></div>
<div>      <i class="c">/* we parsed all options */</i></div>
<div>      <em>break</em><s>;</s></div>
<div>    <s>}</s></div>
<div>  <s>}</s></div>
<div>&nbsp;</div>
<div>  <i class="c">/* we need at least a timestamp string and a command to run */</i></div>
<div>  <em>if</em> <s>(</s>argc <s>-</s> curr_opt <s>&lt;</s> <u>2</u><s>)</s></div>
<div>  <s>{</s></div>
<div>    usage<s>(</s>argv<s>[</s><u>0</u><s>]);</s></div>
<div>    exit<s>(</s>EXIT_FAILURE<s>);</s></div>
<div>  <s>}</s></div>
<div>&nbsp;</div>
<div>  <em>if</em> <s>(!</s>use_direct<s>)</s></div>
<div>  <s>{</s></div>
<div>    <i class="c">// TODO get seconds</i></div>
<div>    <em>int</em> pfds<s>[</s><u>2</u><s>];</s></div>
<div>    <s>(</s><em>void</em><s>)</s> <s>(</s>pipe<s>(</s>pfds<s>)</s> <s>+</s> <u>1</u><s>);</s></div>
<div>    <em>int</em> ret <s>=</s> EXIT_SUCCESS<s>;</s></div>
<div>&nbsp;</div>
<div>    <em>if</em> <s>(</s><u>0</u> <s>==</s> <s>(</s>child_pid <s>=</s> fork<s>()))</s></div>
<div>    <s>{</s></div>
<div>      close<s>(</s><u>1</u><s>);</s>       <i class="c">/* close normal stdout */</i></div>
<div>      <s>(</s><em>void</em><s>)</s> <s>(</s>dup<s>(</s>pfds<s>[</s><u>1</u><s>])</s> <s>+</s> <u>1</u><s>);</s>   <i class="c">/* make stdout same as pfds[1] */</i></div>
<div>      close<s>(</s>pfds<s>[</s><u>0</u><s>]);</s> <i class="c">/* we don't need this */</i></div>
<div>      <i class="c">// fprintf(stderr, "faketime: using --date-prog: %s\n", date_cmd);</i></div>
<div>      <em>if</em> <s>(</s>EXIT_SUCCESS <s>!=</s> execlp<s>(</s>date_cmd<s>,</s> date_cmd<s>,</s> <b class="s">"-d"</b><s>,</s> argv<s>[</s>curr_opt<s>],</s> <b class="s">"+%s"</b><s>,(</s><em>char</em> <u class="a">*</u><s>)</s> NULL<s>))</s></div>
<div>      <s>{</s></div>
<div>        perror<s>(</s><b class="s">"faketime: Running (g)date failed"</b><s>);</s></div>
<div>        exit<s>(</s>EXIT_FAILURE<s>);</s></div>
<div>      <s>}</s></div>
<div>    <s>}</s></div>
<div>    <em>else</em></div>
<div>    <s>{</s></div>
<div>      <em>char</em> buf<s>[</s><u>256</u><s>]</s> <s>=</s> <s>{</s><u>0</u><s>};</s> <i class="c">/* e will have way less than 256 chars from date */</i></div>
<div>      close<s>(</s>pfds<s>[</s><u>1</u><s>]);</s>   <i class="c">/* we won't write to this */</i></div>
<div>      <s>(</s><em>void</em><s>)</s> <s>(</s>read<s>(</s>pfds<s>[</s><u>0</u><s>],</s> buf<s>,</s> <u>256</u><s>)</s> <s>+</s> <u>1</u><s>);</s></div>
<div>      waitpid<s>(</s>child_pid<s>,</s> <s>&amp;</s>ret<s>,</s> <u>0</u><s>);</s></div>
</div>
<div class="mmo" style="top:0;height:60px"></div>
<div class="mmo" style="top:238px;height:482px"></div>
<div id="mmbox"></div>
</div>
<div id="vtrack"></div><div id="vthumb"></div><div id="mmbot"></div>
<div id="split"></div>
<div id="ph"><span class="t">Function List</span>
<svg class="abs" style="left:269px;top:5px" width="9" height="8" viewBox="0 0 9 8"><path d="M8 0.3v7.4L1 4z" fill="#a8a397"/></svg>
<svg class="abs" style="left:285px;top:4.5px" width="9" height="9" viewBox="0 0 9 9"><path d="M0.8 0.8l7.4 7.4M8.2 0.8l-7.4 7.4" stroke="#c4c0b4" stroke-width="1.1" fill="none"/></svg>
</div>
<div id="pt"></div>
<svg class="abs" style="left:800px;top:94px" width="300" height="26" viewBox="800 94 300 26">
<!-- window + page -->
<rect x="809" y="99" width="14" height="13.6" fill="#fff"/><rect x="809" y="99" width="14" height="2.7" fill="#2d6cb5"/>
<path d="M816.6 104.3H821.8M816.6 106.7H821.8M816.6 109.1H821.8" stroke="#6a6a6a" stroke-width="1"/>
<path d="M807.8 103.6H813.4L816.2 106.4V114H807.8Z" fill="#fff" stroke="#1c1b19" stroke-width="1.2"/>
<path d="M813.2 104V106.8H816" fill="none" stroke="#555" stroke-width="0.8"/>
<!-- globe refresh -->
<circle cx="839.6" cy="106.6" r="7.6" fill="#fff" stroke="#1f6fc0" stroke-width="1.6"/>
<path d="M839.6 99V114.2M832 106.6H847.2M833.5 102.6H845.7M833.5 110.6H845.7" stroke="#1f6fc0" stroke-width="1.2" fill="none"/>
<ellipse cx="839.6" cy="106.6" rx="3.6" ry="7.6" fill="none" stroke="#1f6fc0" stroke-width="1.2"/>
<circle cx="843.8" cy="111.4" r="5.6" fill="#23221e"/>
<path d="M840.2 110.4A3.8 3.8 0 0 1 847 109.2M847.4 112.4A3.8 3.8 0 0 1 840.6 113.6" stroke="#1fa050" stroke-width="1.5" fill="none"/>
<path d="M848.4 107.2V110.6H845ZM839.2 115.6V112.2H842.6Z" fill="#1fa050"/>
<!-- copy -->
<path d="M856 99H861.5L864 101.5V111H856Z" fill="#d4d8dc"/>
<path d="M857.3 101.5H860.5M857.3 103.7H861.5M857.3 105.9H861.5M857.3 108.1H861.5" stroke="#5a7a9a" stroke-width="0.9"/>
<path d="M862.4 102.4H868.6L872 105.8V115H862.4Z" fill="#fff" stroke="#2a2926" stroke-width="0.8"/>
<path d="M868.4 102.6V106H872" fill="none" stroke="#777" stroke-width="0.8"/>
<path d="M864.2 106H867M864.2 108.5H870.2M864.2 110.7H870.2M864.2 112.9H870.2" stroke="#2d6cb5" stroke-width="1"/>
<!-- AZ -->
<text x="879.4" y="106.6" font-family="Liberation Sans,sans-serif" font-weight="bold" font-size="10.2" fill="#1f6fc0">A</text>
<text x="880" y="114.9" font-family="Liberation Sans,sans-serif" font-weight="bold" font-size="10.2" fill="#d83018">Z</text>
<path d="M892 99.6V112" stroke="#5c5b58" stroke-width="1.8"/><path d="M888 108.8L892 115L896 108.8L892 110.4Z" fill="#5c5b58" stroke="#5c5b58" stroke-width="0.8" stroke-linejoin="round"/>
<!-- ZA -->
<text x="904.2" y="106.4" font-family="Liberation Sans,sans-serif" font-weight="bold" font-size="10.2" fill="#d83018">Z</text>
<text x="903.6" y="115" font-family="Liberation Sans,sans-serif" font-weight="bold" font-size="10.2" fill="#1f6fc0">A</text>
<path d="M916 99.6V112" stroke="#5c5b58" stroke-width="1.8"/><path d="M912 108.8L916 115L920 108.8L916 110.4Z" fill="#5c5b58" stroke="#5c5b58" stroke-width="0.8" stroke-linejoin="round"/>
</svg>

<div id="tree"><div id="treein"><i class="h" style="left:817px;top:132.0px;width:16.5px"></i><svg class="tri" style="left:812.5px;top:129.0px" width="10" height="8" viewBox="0 0 10 8"><path d="M0.3 0.3h9.4L5 7.6z" fill="#8c8b87"/></svg><span class="tl b" style="left:833.0px;top:125.0px">Function</span><i class="h" style="left:815px;top:153.0px;width:33.5px"></i><span class="tl" style="left:848.0px;top:146.0px;letter-spacing:-0.1px">cleanup_shobjs</span><i class="h" style="left:815px;top:174.0px;width:33.5px"></i><svg class="tri" style="left:827.5px;top:171.0px" width="10" height="8" viewBox="0 0 10 8"><path d="M0.3 0.3h9.4L5 7.6z" fill="#8c8b87"/></svg><span class="tl" style="left:848.0px;top:167.0px">main</span><i class="h" style="left:830px;top:195.0px;width:33.5px"></i><svg class="tri" style="left:842.5px;top:192.0px" width="10" height="8" viewBox="0 0 10 8"><path d="M0.3 0.3h9.4L5 7.6z" fill="#8c8b87"/></svg><span class="tl b" style="left:863.0px;top:188.0px;letter-spacing:-0.2px">Parameter</span><i class="h" style="left:845px;top:216.0px;width:33.5px"></i><span class="tl" style="left:878.0px;top:209.0px;letter-spacing:0.2px">int argc</span><i class="h" style="left:845px;top:237.0px;width:33.5px"></i><span class="tl" style="left:878.0px;top:230.0px;letter-spacing:0.14px">char **argv</span><i class="h" style="left:830px;top:258.0px;width:33.5px"></i><svg class="tri" style="left:842.5px;top:255.0px" width="10" height="8" viewBox="0 0 10 8"><path d="M0.3 0.3h9.4L5 7.6z" fill="#8c8b87"/></svg><span class="tl b" style="left:863.0px;top:251.0px;letter-spacing:0.1px">Variable</span><i class="h" style="left:845px;top:279.0px;width:33.5px"></i><span class="tl" style="left:878.0px;top:272.0px;letter-spacing:0.06px">pid_t child_pid</span><i class="h" style="left:845px;top:300.0px;width:33.5px"></i><span class="tl" style="left:878.0px;top:293.0px;letter-spacing:0.22px">long offset</span><i class="h" style="left:845px;top:321.0px;width:33.5px"></i><span class="tl" style="left:878.0px;top:314.0px;letter-spacing:0.3px">int pfds[2]</span><i class="h" style="left:845px;top:342.0px;width:33.5px"></i><span class="tl" style="left:878.0px;top:335.0px;letter-spacing:0.07px">int keepalive_fds[2]</span><i class="h" style="left:845px;top:363.0px;width:33.5px"></i><span class="tl" style="left:878.0px;top:356.0px;letter-spacing:0.17px">int shm_fd</span><i class="h" style="left:845px;top:384.0px;width:33.5px"></i><span class="tl" style="left:878.0px;top:377.0px;letter-spacing:-0.1px">sem_t *sem</span><i class="h" style="left:845px;top:405.0px;width:33.5px"></i><span class="tl" style="left:878.0px;top:398.0px;letter-spacing:0.15px">char *ftpl_path</span><i class="h" style="left:845px;top:426.0px;width:33.5px"></i><span class="tl" style="left:878.0px;top:419.0px;letter-spacing:-0.35px">FILE *check</span><i class="h" style="left:845px;top:447.0px;width:33.5px"></i><span class="tl" style="left:878.0px;top:440.0px">size_t len</span><i class="h" style="left:845px;top:468.0px;width:33.5px"></i><span class="tl" style="left:878.0px;top:461.0px;letter-spacing:0.33px">int ret</span><i class="h" style="left:845px;top:489.0px;width:33.5px"></i><span class="tl" style="left:878.0px;top:482.0px;letter-spacing:0.2px">char buf</span><i class="h" style="left:845px;top:510.0px;width:33.5px"></i><span class="tl" style="left:878.0px;top:503.0px;letter-spacing:0.22px">int curr_opt</span><i class="h" style="left:845px;top:531.0px;width:33.5px"></i><span class="tl" style="left:878.0px;top:524.0px">bool use_mt</span><i class="h" style="left:845px;top:552.0px;width:33.5px"></i><span class="tl" style="left:878.0px;top:545.0px;letter-spacing:0.08px">bool fake_pid</span><i class="h" style="left:845px;top:573.0px;width:33.5px"></i><span class="tl" style="left:878.0px;top:566.0px;letter-spacing:0.33px">int ret</span><i class="h" style="left:845px;top:594.0px;width:33.5px"></i><span class="tl" style="left:878.0px;top:587.0px;letter-spacing:0.18px">char buf[256]</span><i class="h" style="left:815px;top:615.0px;width:33.5px"></i><svg class="tri" style="left:827.5px;top:612.0px" width="10" height="8" viewBox="0 0 10 8"><path d="M0.3 0.3h9.4L5 7.6z" fill="#8c8b87"/></svg><span class="tl" style="left:848.0px;top:608.0px;letter-spacing:-0.25px">usage</span><i class="h" style="left:830px;top:636.0px;width:33.5px"></i><svg class="tri" style="left:844.0px;top:631.5px" width="8" height="10" viewBox="0 0 8 10"><path d="M0.3 0.3v9.4L7.6 5z" fill="#8c8b87"/></svg><span class="tl b" style="left:863.0px;top:629.0px;letter-spacing:-0.2px">Parameter</span><i class="v" style="left:815px;top:137.0px;height:479.0px"></i><i class="v" style="left:830px;top:179.0px;height:80.0px"></i><i class="v" style="left:845px;top:200.0px;height:38.0px"></i><i class="v" style="left:845px;top:263.0px;height:332.0px"></i><i class="v" style="left:830px;top:620.0px;height:17.0px"></i></div></div>
<div id="outrow"></div>
<div id="outtab"><span>Output Window</span></div>
<div id="status">
<span class="t" style="left:7.5px;letter-spacing:0.15px">For Help, press F1</span>
<i class="sp" style="left:350px"></i><span class="t" style="left:355.5px;letter-spacing:0.03px">Ln 1, Col 1, C0</span>
<i class="sp" style="left:444px"></i><span class="t" style="left:449.5px">LF</span>
<i class="sp" style="left:504px"></i><span class="t" style="left:509.3px;letter-spacing:0.55px">ISO-8859-1</span>
<div class="bx" style="left:582px;width:18px"></div>
<svg class="abs" style="left:587.5px;top:6px" width="8" height="13" viewBox="0 0 8 13"><path d="M4 1L7.2 5H0.8zM4 12L7.2 8H0.8z" fill="#0d0d0c"/></svg>
<i class="sp" style="left:604px"></i><span class="t" style="left:610.5px;letter-spacing:0.2px">C/C++</span>
<div class="bx" style="left:654.5px;width:19px"></div>
<svg class="abs" style="left:660px;top:6px" width="8" height="13" viewBox="0 0 8 13"><path d="M4 1L7.2 5H0.8zM4 12L7.2 8H0.8z" fill="#0d0d0c"/></svg>
<i class="sp" style="left:677.5px"></i><span class="t" style="left:683.5px;letter-spacing:0.42px">Mod: 6 Jun 2021 14:00:46 14:00:46</span>
<i class="sp" style="left:886px"></i><span class="t" style="left:891.5px;letter-spacing:0.3px">Size: 12355</span>
<i class="sp" style="left:968px"></i>
<div class="bx" style="left:995px;width:43px"></div><span class="t" style="left:1007.5px;font-size:9px;color:#c9c5ba;top:5px;">R/W</span>
<i class="sp" style="left:1043px"></i>
</div>
</div>
</body>
</html>
